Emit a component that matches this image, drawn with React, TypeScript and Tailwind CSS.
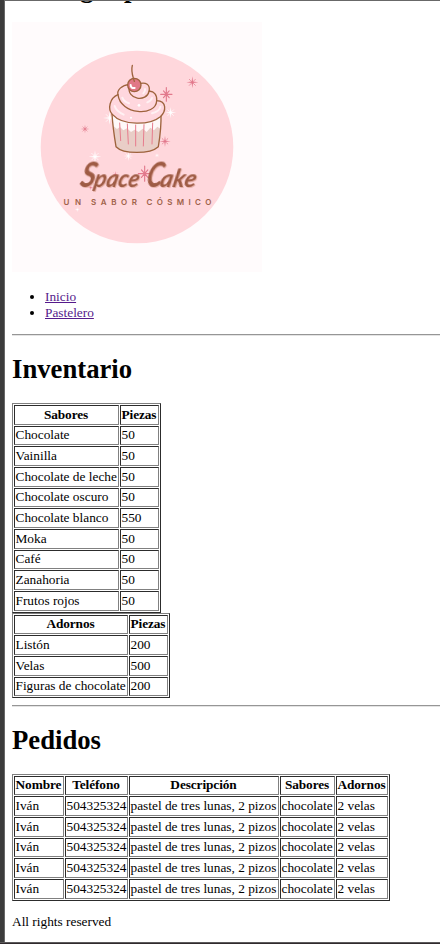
import React from 'react';

const cellBorder = 'border border-t-[#2c2c2c] border-l-[#2c2c2c] border-r-[#808080] border-b-[#808080]';

type Col = { title: string; width: string };

function DataTable({ cols, rows, heights, width }: { cols: Col[]; rows: string[][]; heights: string[]; width: string }) {
  return (
    <table
      className={`${width} table-fixed border-separate border-spacing-px border border-t-[#808080] border-l-[#808080] border-r-[#2c2c2c] border-b-[#2c2c2c] text-[13.33px] leading-[15px]`}
    >
      <colgroup>
        {cols.map((c, i) => (
          <col key={i} className={c.width} />
        ))}
      </colgroup>
      <thead>
        <tr className={heights[0]}>
          {cols.map((c, i) => (
            <th key={i} className={`${cellBorder} pt-0 pr-px pb-[2px] pl-0 text-center font-bold tracking-[-0.1px] whitespace-nowrap`}>{c.title}</th>
          ))}
        </tr>
      </thead>
      <tbody>
        {rows.map((r, i) => (
          <tr key={i} className={heights[i + 1]}>
            {r.map((c, j) => (
              <td key={j} className={`${cellBorder} pt-0 pr-0 pb-[2px] pl-[0.5px] text-left whitespace-nowrap`}>{c}</td>
            ))}
          </tr>
        ))}
      </tbody>
    </table>
  );
}

const A = 'h-[20px]';
const B = 'h-[19px]';

function Sparkle({ x, y, r, color }: { x: number; y: number; r: number; color: string }) {
  const k = r * 0.12;
  return (
    <g transform={`translate(${x} ${y})`} fill={color}>
      <path d={`M0 ${-r}L${k} ${-k}L${r} 0L${k} ${k}L0 ${r}L${-k} ${k}L${-r} 0L${-k} ${-k}Z`} />
      <path
        d={`M${-r * 0.5} ${-r * 0.5}L${r * 0.5} ${r * 0.5}M${r * 0.5} ${-r * 0.5}L${-r * 0.5} ${r * 0.5}`}
        stroke={color}
        strokeWidth={r * 0.12}
        strokeDasharray={`${r * 0.16} ${r * 0.12}`}
      />
    </g>
  );
}

function Star({ x, y, r }: { x: number; y: number; r: number }) {
  return (
    <path
      transform={`translate(${x} ${y})`}
      d={`M0 ${-r * 1.2}V${r * 1.2}M${-r} 0H${r}M${-r * 0.5} ${-r * 0.6}L${r * 0.5} ${r * 0.6}M${r * 0.5} ${-r * 0.6}L${-r * 0.5} ${r * 0.6}`}
      stroke="#e2798c"
      strokeWidth="3.4"
      strokeLinecap="round"
    />
  );
}

function Logo() {
  return (
    <svg className="block size-[250px]" viewBox="12 22 250 250" role="img">
      <rect x="12" y="22" width="250" height="250" fill="#fffbfc" />
      <circle cx="137" cy="147" r="96.3" fill="#ffd7dc" />
      <g transform="translate(60 50) scale(.33333)" fill="none" strokeLinejoin="round" strokeLinecap="round">
        <Sparkle x={149} y={204} r={20} color="#fff" />
        <Sparkle x={332} y={188} r={17} color="#fff" />
        <Sparkle x={105} y={320} r={19} color="#fff" />
        <Sparkle x={205} y={318} r={15} color="#fff" />
        <Sparkle x={291} y={316} r={7} color="#fff" />
        <Sparkle x={397} y={97} r={18} color="#e2798c" />
        <Sparkle x={75} y={237} r={13} color="#e2798c" />
        <Sparkle x={315} y={274} r={17} color="#e2798c" />
        <Star x={319} y={133} r={17} />
        <path d="M156 192C158 225 163 260 168 290C190 313 270 313 295 290C300 260 304 225 303 192C270 226 188 226 156 192Z" fill="#e9cec7" />
        <path d="M157 194C188 225 270 225 303 194L301 236L292 230L282 241L271 233L260 246L248 236L236 246L224 239L213 246L201 235L190 241L180 231L171 237L160 228Z" fill="#fff8f8" />
        <path d="M179 219L182 272M202 222L205 282M227 225V288M252 224L250 288M278 219L276 282" stroke="#e77b8d" strokeWidth="3" />
        <path d="M156 192C158 225 163 260 168 290C190 313 270 313 295 290C300 260 304 225 303 192" stroke="#9e633d" strokeWidth="4" />
        <path d="M174 134C149 144 142 177 157 193C188 228 270 226 301 200C319 184 321 153 290 152C292 135 281 122 267 124C272 103 256 97 242 100L208 103C185 105 170 121 174 134Z" fill="#ffd7de" stroke="#9e633d" strokeWidth="4" />
        <path d="M174 134C181 195 288 201 290 152M208 108C199 151 261 157 267 124" stroke="#9e633d" strokeWidth="4" />
        <path d="M164 168C168 181 178 188 191 194M276 190C292 186 300 178 301 170M187 143C190 152 196 157 207 160M262 157C269 154 274 150 276 144M250 130C254 126 256 122 255 117" stroke="#fff1f3" strokeWidth="6" />
        <circle cx="213" cy="203" r="3" fill="#fff" />
        <circle cx="237" cy="166" r="4" fill="#fff" />
        <circle cx="223" cy="105" r="20" fill="#e17887" stroke="#9e633d" strokeWidth="4" />
        <path d="M223 94C218 76 212 65 217 46" stroke="#9e633d" strokeWidth="4" />
        <path d="M212 105C212 113 217 115 224 114" stroke="#fff" strokeWidth="6" />
      </g>
      <g transform="translate(50 145) scale(.33333)">
        <Sparkle x={82} y={194} r={8} color="#fff" />
        <Sparkle x={122} y={128} r={8} color="#e2798c" />
        <Sparkle x={196} y={88} r={10} color="#e2798c" />
        <Star x={284} y={86} r={19} />
      </g>
      <g
        className="[filter:drop-shadow(1px_1px_0_#e6b0a8)]"
        transform="translate(0 187) skewX(-12)"
        fontFamily="Lato, sans-serif"
        fontStyle="italic"
        fontWeight="700"
        fill="#9e5b44"
      >
        <text x="79" y="0" fontSize="35" textLength="15" lengthAdjust="spacingAndGlyphs">S</text>
        <text x="93" y="0" fontSize="25" textLength="45" lengthAdjust="spacingAndGlyphs">pace</text>
        <text x="145" y="0" fontSize="35" textLength="16" lengthAdjust="spacingAndGlyphs">C</text>
        <text x="159" y="0" fontSize="25" textLength="36" lengthAdjust="spacingAndGlyphs">ake</text>
      </g>
      <g fontFamily="Inter, sans-serif" fontWeight="600" fontSize="8" fill="#a0624a">
        <text x="63.5" y="205" textLength="17.5">UN</text>
        <text x="91" y="205" textLength="46">SABOR</text>
        <text x="146.5" y="205" textLength="65">CÓSMICO</text>
      </g>
    </svg>
  );
}

function Rule() {
  return <hr className="h-[2px] border-0 border-t border-b border-t-[#969696] border-b-[#e4e4e4]" />;
}

const flavors = [
  ['Chocolate', '50'],
  ['Vainilla', '50'],
  ['Chocolate de leche', '50'],
  ['Chocolate oscuro', '50'],
  ['Chocolate blanco', '550'],
  ['Moka', '50'],
  ['Café', '50'],
  ['Zanahoria', '50'],
  ['Frutos rojos', '50'],
];

const toppings = [
  ['Listón', '200'],
  ['Velas', '500'],
  ['Figuras de chocolate', '200'],
];

const orders = Array.from({ length: 5 }, () => ['Iván', '504325324', 'pastel de tres lunas, 2 pizos', 'chocolate', '2 velas']);

export default function App() {
  return (
    <div className="flex h-[944px] w-[440px] flex-col overflow-hidden bg-white font-['Liberation_Serif',serif] text-black">
      <div className="flex h-[942px] border-l-4 border-[#3c3c3c]">
        <div className="w-[436px] border-t border-l border-[#686868] pl-[7px]">
          <div className="flex h-[21px] items-start overflow-hidden">
            <h1 className="-mt-[28px] text-[26.7px] leading-[30px] font-bold whitespace-nowrap">Analogos para</h1>
          </div>
          <Logo />
          <ul className="mt-[17px] h-[45px] list-disc pl-[33px] text-[13.33px] leading-4 text-[#551a8b] marker:text-black">
            <li><a className="underline" href="#inicio">Inicio</a></li>
            <li><a className="underline" href="#pastelero">Pastelero</a></li>
          </ul>
          <Rule />
          <h1 className="mt-[18px] mb-[19px] text-[26.7px] leading-[30px] font-bold">Inventario</h1>
          <DataTable
            width="w-[149px]"
            cols={[{ title: 'Sabores', width: 'w-[105px]' }, { title: 'Piezas', width: 'w-[39px]' }]}
            rows={flavors}
            heights={[A, B, A, A, B, A, A, B, A, A]}
          />
          <DataTable
            width="w-[158px]"
            cols={[{ title: 'Adornos', width: 'w-[114px]' }, { title: 'Piezas', width: 'w-[39px]' }]}
            rows={toppings}
            heights={[B, A, A, B]}
          />
          <div className="pt-[7px]"><Rule /></div>
          <h1 className="mt-[18px] mb-[19px] text-[26.7px] leading-[30px] font-bold">Pedidos</h1>
          <DataTable
            width="w-[378px]"
            cols={[
              { title: 'Nombre', width: 'w-[50px]' },
              { title: 'Teléfono', width: 'w-[63px]' },
              { title: 'Descripción', width: 'w-[150px]' },
              { title: 'Sabores', width: 'w-[55px]' },
              { title: 'Adornos', width: 'w-[52px]' },
            ]}
            rows={orders}
            heights={[B, A, A, B, A, A]}
          />
          <p className="mt-[13px] text-[13.33px] leading-4">All rights reserved</p>
        </div>
      </div>
      <div className="h-px bg-[#5c5a5b]" />
      <div className="h-px bg-[#302a2d]" />
    </div>
  );
}
